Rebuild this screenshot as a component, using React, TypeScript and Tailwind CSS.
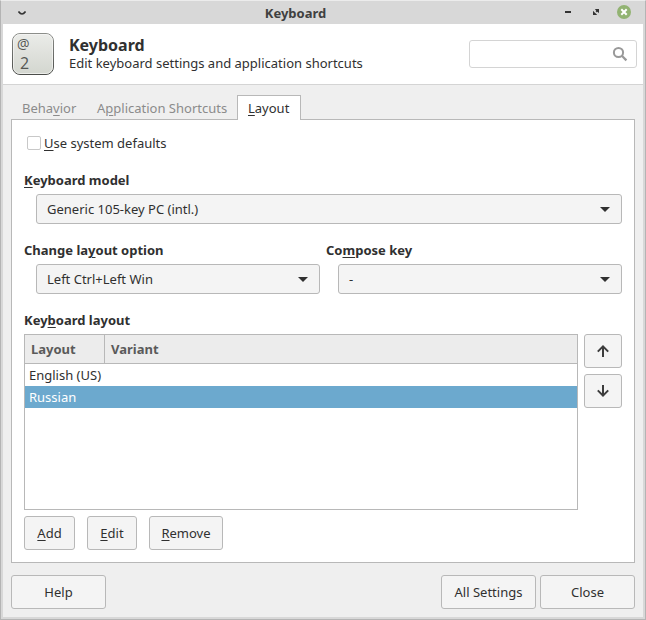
import { useState, type ReactNode } from 'react';

const buttonStyle =
  'flex h-[34px] items-center justify-center rounded-[3px] border border-[#b8b8b8] bg-[#f4f4f4] hover:bg-white';

function Key({ children }: { children: ReactNode }) {
  return <span className="underline decoration-1 underline-offset-2">{children}</span>;
}

function Picker({ id, label, options }: { id: string; label: ReactNode; options: string[] }) {
  return (
    <div className="flex min-w-0 flex-1 flex-col gap-1">
      <label htmlFor={id} className="font-bold leading-5">
        {label}
      </label>
      <div className="relative ml-3">
        <select
          id={id}
          className="block h-[30px] w-full appearance-none rounded-[3px] border border-[#b8b8b8] bg-[#f4f4f4] pr-8 pl-2.5"
        >
          {options.map((option) => (
            <option key={option}>{option}</option>
          ))}
        </select>
        <svg viewBox="0 0 10 5" className="pointer-events-none absolute top-[13px] right-3 h-[5px] w-2.5" fill="#303030" aria-hidden="true">
          <path d="M0 0h10L5 5z" />
        </svg>
      </div>
    </div>
  );
}

function KeyCapIcon() {
  return (
    <svg viewBox="0 0 42 42" className="h-[42px] w-[42px] shrink-0" aria-hidden="true">
      <defs>
        <linearGradient id="cap" x1="0" y1="0" x2="0" y2="1">
          <stop offset="0" stopColor="#ebece9" />
          <stop offset="1" stopColor="#d3d6cf" />
        </linearGradient>
        <linearGradient id="rim" x1="0" y1="0" x2="0" y2="1">
          <stop offset="0" stopColor="#8c8e8a" />
          <stop offset="1" stopColor="#4b4d4a" />
        </linearGradient>
      </defs>
      <rect x="0.5" y="0.5" width="41" height="41" rx="7.5" fill="url(#cap)" stroke="url(#rim)" />
      <rect x="1.5" y="1.5" width="39" height="39" rx="6.5" fill="none" stroke="#f7f7f5" strokeOpacity="0.7" />
      <text x="5" y="16" fontSize="14" fill="#555753" className="font-['Open_Sans',sans-serif]">@</text>
      <text x="8" y="36" fontSize="16" fill="#555753" className="font-['Open_Sans',sans-serif]">2</text>
    </svg>
  );
}

function TitleBar() {
  return (
    <div className="flex h-[23px] items-center bg-[#d8d8d8] text-[#404040]">
      <button type="button" aria-label="Window menu" className="ml-[13px] flex h-5 w-4 items-center justify-center">
        <svg viewBox="0 0 8 4" className="h-1 w-2" fill="none" stroke="#333" strokeWidth="1.6" aria-hidden="true">
          <path d="M0.5 0.5Q4 5.5 7.5 0.5" />
        </svg>
      </button>
      <h1 className="flex-1 text-center font-bold">Keyboard</h1>
      <div className="flex h-full items-start justify-end gap-3.5 pt-1 pr-3.5">
        <button type="button" aria-label="Minimize" className="flex h-3.5 w-3.5 items-center justify-center">
          <svg viewBox="0 0 6 2" className="h-0.5 w-1.5" fill="#333" aria-hidden="true">
            <path d="M0 0h6v2H0z" />
          </svg>
        </button>
        <button type="button" aria-label="Maximize" className="flex h-3.5 w-3.5 items-center justify-center">
          <svg viewBox="0 0 6 6" className="h-1.5 w-1.5" fill="#333" aria-hidden="true">
            <path d="M1.8 0H6V4.2L4.6 2.8 3.9 3.5 2.5 2.1 3.2 1.4zM0 1.8L1.4 3.2 2.8 4.6 4.2 6H0z" />
          </svg>
        </button>
        <button type="button" aria-label="Close window" className="h-3.5 w-3.5">
          <svg viewBox="0 0 14 14" className="h-3.5 w-3.5" aria-hidden="true">
            <circle cx="7" cy="7" r="7" fill="#92b372" />
            <path d="M4.3 4.3l5.4 5.4M9.7 4.3L4.3 9.7" stroke="#fff" strokeWidth="2" />
          </svg>
        </button>
      </div>
    </div>
  );
}

function Header() {
  return (
    <header className="flex h-[61px] items-center border-b border-[#d4d4d4] bg-white pr-1.5 pl-[9px]">
      <KeyCapIcon />
      <div className="ml-[15px] flex-1">
        <h2 className="text-[16px] leading-[18px] font-bold">Keyboard</h2>
        <p className="leading-[18px] whitespace-nowrap">Edit keyboard settings and application shortcuts</p>
      </div>
      <div className="relative w-[168px]">
        <input
          type="search"
          aria-label="Search settings"
          className="block h-7 w-full rounded-[3px] border border-[#d4d4d4] bg-white pr-8 pl-2 outline-none"
        />
        <svg
          viewBox="0 0 16 16"
          className="pointer-events-none absolute top-1.5 right-[9px] h-4 w-4"
          fill="none"
          stroke="#999"
          strokeWidth="2"
          aria-hidden="true"
        >
          <circle cx="6.5" cy="6.5" r="4.6" />
          <path d="M9.8 9.8l4.6 4.6" strokeWidth="2.2" />
        </svg>
      </div>
    </header>
  );
}

function LayoutList() {
  const [selected, setSelected] = useState('Russian');
  return (
    <div className="flex-1 border border-[#b8b8b8] bg-white">
      <table className="w-full table-fixed border-separate border-spacing-0 text-left" aria-labelledby="layouts-label">
        <thead>
          <tr className="h-[29px] bg-[#ececec] text-[#5a5a5a]">
            <th className="w-20 border-r border-b border-[#b8b8b8] px-1.5">Layout</th>
            <th className="border-b border-[#b8b8b8] px-1.5">Variant</th>
          </tr>
        </thead>
        <tbody>
          {['English (US)', 'Russian'].map((name) => (
            <tr
              key={name}
              onClick={() => setSelected(name)}
              className={name === selected ? 'h-[22px] bg-[#6ca9ce] text-white' : 'h-[22px]'}
            >
              <td className="pl-1 whitespace-nowrap">{name}</td>
              <td />
            </tr>
          ))}
        </tbody>
      </table>
    </div>
  );
}

function LayoutPanel() {
  return (
    <section role="tabpanel" className="flex flex-1 flex-col border border-[#b8b8b8] bg-white p-3">
      <label className="flex h-[22px] items-center gap-[3px] pl-[3px]">
        <input type="checkbox" className="h-3.5 w-3.5 appearance-none rounded-[2px] border border-[#c8c8c8] bg-white checked:bg-[#6ca9ce]" />
        <span>
          <Key>U</Key>se system defaults
        </span>
      </label>
      <div className="mt-4 flex">
        <Picker id="model" label={<><Key>K</Key>eyboard model</>} options={['Generic 105-key PC (intl.)']} />
      </div>
      <div className="mt-4 flex gap-1.5">
        <Picker id="change" label={<>Change la<Key>y</Key>out option</>} options={['Left Ctrl+Left Win']} />
        <Picker id="compose" label={<>Co<Key>m</Key>pose key</>} options={['-']} />
      </div>
      <h3 id="layouts-label" className="mt-4 mb-1 leading-5 font-bold">
        Key<Key>b</Key>oard layout
      </h3>
      <div className="flex flex-1 gap-1.5">
        <LayoutList />
        <div className="flex w-[38px] flex-col gap-1.5">
          <button type="button" aria-label="Move up" className={buttonStyle}>
            <svg viewBox="0 0 12 12" className="h-3 w-3" fill="none" stroke="#3c3c3c" strokeWidth="2" aria-hidden="true">
              <path d="M6 12V1.5M0.8 6.6L6 1.4l5.2 5.2" />
            </svg>
          </button>
          <button type="button" aria-label="Move down" className={buttonStyle}>
            <svg viewBox="0 0 12 12" className="h-3 w-3" fill="none" stroke="#3c3c3c" strokeWidth="2" aria-hidden="true">
              <path d="M6 0v10.5M0.8 5.4L6 10.6l5.2-5.2" />
            </svg>
          </button>
        </div>
      </div>
      <div className="mt-1.5 flex gap-3">
        <button type="button" className={`${buttonStyle} w-[51px]`}><span><Key>A</Key>dd</span></button>
        <button type="button" className={`${buttonStyle} w-[50px]`}><span><Key>E</Key>dit</span></button>
        <button type="button" className={`${buttonStyle} w-[74px]`}><span><Key>R</Key>emove</span></button>
      </div>
    </section>
  );
}

export default function App() {
  return (
    <div className="flex min-h-screen flex-col border border-t-[#ececec] border-r-[#b4b4b4] border-b-[#b4b4b4] border-l-[#b4b4b4] bg-[#d8d8d8] font-['Noto_Sans',sans-serif] text-[13px] leading-[18px] text-[#303030]">
      <TitleBar />
      <main className="mx-0.5 mb-0.5 flex flex-1 flex-col bg-[#efefef]">
        <Header />
        <div className="flex flex-1 flex-col px-2 pt-2.5 pb-2">
          <div role="tablist" className="relative z-10 -mb-px flex h-[25px]">
            <button type="button" role="tab" aria-selected="false" className="w-[75px] pl-[11px] text-left text-[#8b8b8b]">
              Beha<Key>v</Key>ior
            </button>
            <button type="button" role="tab" aria-selected="false" className="w-[151px] pl-[11px] text-left whitespace-nowrap text-[#8b8b8b]">
              A<Key>p</Key>plication Shortcuts
            </button>
            <button type="button" role="tab" aria-selected="true" className="w-16 border border-b-0 border-[#b8b8b8] bg-white pl-2.5 text-left">
              <Key>L</Key>ayout
            </button>
          </div>
          <LayoutPanel />
          <div className="mt-3 flex gap-1">
            <button type="button" className={`${buttonStyle} mr-auto w-[95px]`}>Help</button>
            <button type="button" className={`${buttonStyle} w-[95px]`}>All Settings</button>
            <button type="button" className={`${buttonStyle} w-[95px]`}>Close</button>
          </div>
        </div>
      </main>
    </div>
  );
}
